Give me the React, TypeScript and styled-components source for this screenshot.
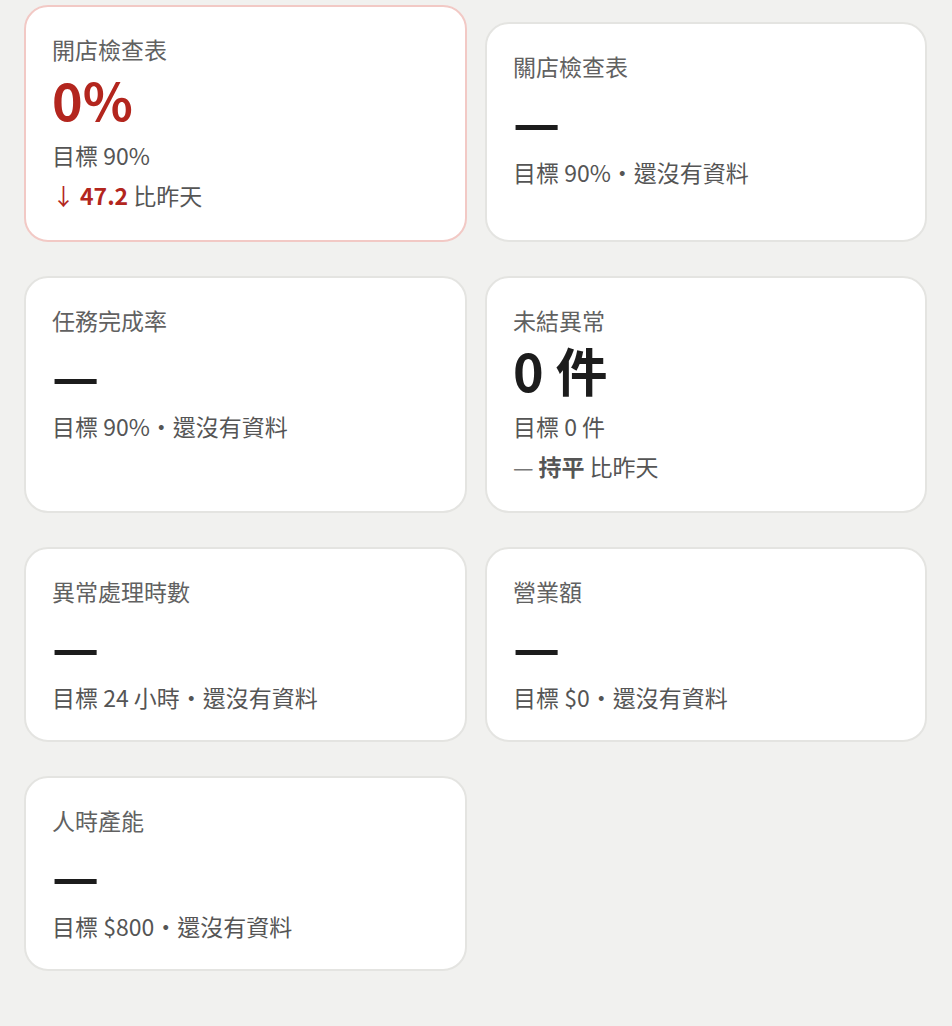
import React from "react";
import styled, { createGlobalStyle } from "styled-components";

const GlobalStyle = createGlobalStyle`
  html, body {
    margin: 0;
    padding: 0;
    background: #f1f1ef;
  }
  body {
    font-family: "Noto Sans CJK TC", "Noto Sans", sans-serif;
  }
`;

const Page = styled.div`
  display: grid;
  grid-template-columns: 443px 442px;
  column-gap: 18px;
  row-gap: 34px;
  padding: 22px 25px 40px 24px;
`;

const Card = styled.div<{ $alert?: boolean }>`
  display: flex;
  flex-direction: column;
  background: #ffffff;
  border: 2px solid ${(p) => (p.$alert ? "#f2c9c5" : "#e4e4e1")};
  border-radius: 24px;
  padding: 28px 26px 28px;
  margin-top: ${(p) => (p.$alert ? "-17px" : "0")};
`;

const Title = styled.div`
  font-size: 23px;
  line-height: 28px;
  color: #616161;
  margin-bottom: 4px;
`;

const Value = styled.div<{ $tone?: "red" | "dark" | "empty" }>`
  height: 64px;
  font-size: 52px;
  line-height: ${(p) => (p.$tone === "empty" ? "72px" : "64px")};
  font-weight: 700;
  color: ${(p) => (p.$tone === "red" ? "#b3261e" : "#1c1c1c")};
`;

const Sub = styled.div`
  font-size: 23px;
  line-height: 30px;
  color: #555555;
  margin-top: 9px;
`;

const Delta = styled.div`
  display: flex;
  align-items: baseline;
  gap: 5px;
  font-size: 23px;
  line-height: 34px;
  color: #555555;
  margin-top: 8px;
`;

const Mark = styled.span<{ $tone?: "red" | "flat" }>`
  color: ${(p) => (p.$tone === "red" ? "#b3261e" : "#777777")};
`;

const Amount = styled.b<{ $tone?: "red" | "flat" }>`
  font-weight: 700;
  color: ${(p) => (p.$tone === "red" ? "#b3261e" : "#555555")};
`;

type Kpi = {
  title: string;
  value?: string;
  tone?: "red" | "dark";
  target: string;
  delta?: { mark: string; amount: string; tone: "red" | "flat" };
  alert?: boolean;
};

const kpis: Kpi[] = [
  {
    title: "開店檢查表",
    value: "0%",
    tone: "red",
    target: "目標 90%",
    delta: { mark: "↓", amount: "47.2", tone: "red" },
    alert: true,
  },
  { title: "關店檢查表", target: "目標 90%・還沒有資料" },
  { title: "任務完成率", target: "目標 90%・還沒有資料" },
  {
    title: "未結異常",
    value: "0 件",
    tone: "dark",
    target: "目標 0 件",
    delta: { mark: "—", amount: "持平", tone: "flat" },
  },
  { title: "異常處理時數", target: "目標 24 小時・還沒有資料" },
  { title: "營業額", target: "目標 $0・還沒有資料" },
  { title: "人時產能", target: "目標 $800・還沒有資料" },
];

export default function App() {
  return (
    <>
      <GlobalStyle />
      <Page>
        {kpis.map((k) => (
          <Card key={k.title} $alert={k.alert}>
            <Title>{k.title}</Title>
            <Value $tone={k.value ? k.tone : "empty"}>{k.value ?? "—"}</Value>
            <Sub>{k.target}</Sub>
            {k.delta && (
              <Delta>
                <Mark $tone={k.delta.tone}>{k.delta.mark}</Mark>
                <Amount $tone={k.delta.tone}>{k.delta.amount}</Amount>
                <span>比昨天</span>
              </Delta>
            )}
          </Card>
        ))}
      </Page>
    </>
  );
}
